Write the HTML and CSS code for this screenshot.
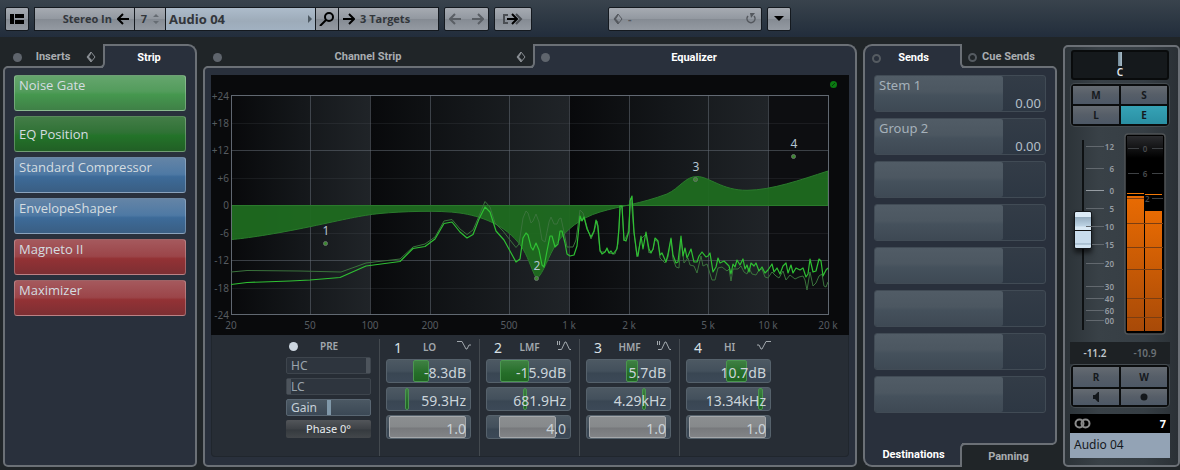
FILE: index.html
```html
<!DOCTYPE html>
<html lang="en">
<head>
    <meta charset="UTF-8">
    <meta name="viewport" content="width=device-width, initial-scale=1.0">
    <title>Channel Settings - Audio 04</title>
    <link rel="stylesheet" href="styles.css">
</head>
<body>
    <svg class="defs" width="0" height="0" aria-hidden="true">
        <symbol id="diamond" viewBox="0 0 10 12">
            <path d="M5 1 9 6 5 11 1 6Z" fill="none" stroke="currentColor"/>
            <path d="M5 1 1 6 5 11 6 9 3 6 5 3Z" fill="currentColor"/>
        </symbol>
        <symbol id="arrow-left" viewBox="0 0 12 12">
            <path d="M12 6H2M6 1 1 6l5 5" fill="none" stroke="currentColor" stroke-width="2"/>
        </symbol>
        <symbol id="arrow-right" viewBox="0 0 12 12">
            <path d="M0 6h10M6 1l5 5-5 5" fill="none" stroke="currentColor" stroke-width="2"/>
        </symbol>
        <symbol id="peak" viewBox="0 0 14 9">
            <path d="M.5 0v4M2.500 0v4M1 8.500h3.500L8 1h1l3.500 7.500H14" fill="none" stroke="currentColor"/>
        </symbol>
    </svg>

    <header class="toolbar">
        <button class="tool layout" aria-label="Window layout">
            <svg width="14" height="10" viewBox="0 0 14 10"><path d="M0 0h4v10H0zM5 0h9v4H5zM5 6h9v4H5z"/></svg>
        </button>
        <div class="group">
            <button class="tool input-bus">Stereo In <svg width="12" height="12" class="black"><use href="#arrow-left"/></svg></button>
            <button class="tool number">7 <svg width="6" height="12" viewBox="0 0 6 12"><path d="M0 4 3 1l3 3zM0 8l3 3 3-3z" fill="#666c73"/></svg></button>
            <button class="tool channel">Audio 04 <svg width="4" height="8" viewBox="0 0 4 8"><path d="M0 0l4 4-4 4z" fill="#4d5963"/></svg></button>
            <button class="tool search" aria-label="Search">
                <svg width="16" height="14" viewBox="0 0 16 14" fill="none" stroke="#000" stroke-width="2"><circle cx="10" cy="5" r="4"/><path d="M7 8l-6 6"/></svg>
            </button>
            <button class="tool targets"><svg width="12" height="12" class="black"><use href="#arrow-right"/></svg> 3 Targets</button>
        </div>
        <button class="tool history" aria-label="Back and forward">
            <svg width="12" height="12"><use href="#arrow-left"/></svg>
            <svg width="12" height="12"><use href="#arrow-right"/></svg>
        </button>
        <button class="tool export" aria-label="Route output">
            <svg width="20" height="12" viewBox="0 0 20 12" fill="none" stroke-width="2"><path d="M5 2H1v8h4M13 1l5 5-5 5" stroke="#4a4e53"/><path d="M4 6h10M9 1l5 5-5 5" stroke="#000"/></svg>
        </button>
        <button class="tool preset">
            <svg width="10" height="12"><use href="#diamond"/></svg> -
            <svg class="reload" width="12" height="12" viewBox="0 0 12 12"><path d="M3 3a4 4 0 1 0 6 0" fill="none" stroke="currentColor" stroke-width="1.500"/><path d="M5 0h5L6 5z" fill="currentColor"/></svg>
        </button>
        <button class="tool menu" aria-label="Functions menu">
            <svg width="10" height="5" viewBox="0 0 10 5"><path d="M0 0h10L5 5z"/></svg>
        </button>
    </header>

    <main class="panels">
        <section class="panel">
            <div class="tabs">
                <button class="tab inactive"><span class="dot"></span>Inserts<svg width="10" height="12"><use href="#diamond"/></svg></button>
                <button class="tab active">Strip</button>
            </div>
            <div class="panel-body">
                <ul class="modules">
                    <li><button class="module gate">Noise Gate</button></li>
                    <li><button class="module position">EQ Position</button></li>
                    <li><button class="module comp">Standard Compressor</button></li>
                    <li><button class="module comp">EnvelopeShaper</button></li>
                    <li><button class="module sat">Magneto II</button></li>
                    <li><button class="module sat">Maximizer</button></li>
                </ul>
            </div>
        </section>

        <section class="panel">
            <div class="tabs">
                <button class="tab inactive"><span class="dot"></span>Channel Strip<svg width="10" height="12"><use href="#diamond"/></svg></button>
                <button class="tab active"><span class="dot"></span>Equalizer</button>
            </div>
            <div class="panel-body">
                <svg class="graph" viewBox="211 75 638 260">
                    <defs>
                        <linearGradient id="decade">
                            <stop offset="0" stop-color="#08090b"/>
                            <stop offset="0.500" stop-color="#14171a"/>
                            <stop offset="1" stop-color="#202428"/>
                        </linearGradient>
                    </defs>
                    <rect x="211" y="75" width="638" height="260" fill="#090a0c"/>
                    <rect x="231" y="95" width="139" height="220" fill="url(#decade)"/>
                    <rect x="370" y="95" width="199" height="220" fill="url(#decade)"/>
                    <rect x="569" y="95" width="199" height="220" fill="url(#decade)"/>
                    <rect x="768" y="95" width="60" height="220" fill="#0d0e11"/>
                    <path class="grid-minor" d="M231 123.500h597M231 178.500h597M231 233.500h597M231 288.500h597"/>
                    <path class="grid-major" d="M231 150.500h597M231 260.500h597M310.500 95v220M430.500 95v220M509.500 95v220M629.500 95v220M708.500 95v220M370.500 95v220M569.500 95v220M768.500 95v220"/>
                    <path class="curve" d="M231.5 205.5V239.500C245 238.500 275 234 310 226.700S360 215.500 380 213.500 440 210 460 213 505 224 521 246C528 256 530 266 536.500 279 544 273 548 256 557 243S580 218 600 212 640 204 667 194C680 188 685 176.500 697 176.500S722 190.500 747 190.300 800 180 828 171V205.500Z"/>
                    <rect class="frame" x="231.500" y="95.500" width="597" height="219"/>
                    <polyline class="spectrum dim" points="231,272 247,270.500 300,271 341,272 366,263 400,259 413,247 425,244 435,237 444,221 452,219.500 460,229 467,234.500 473,230 479,216 485,201.500 490,207 495,223 503,231 510,240 516,247.500 519,244 523,218 526,211 528,213 531,223 533,221 536,214 539,222 542,240 545,242 549,222 551,217 554,224 557,224 559,219 561,218 564,232 567,247 573,247 576,240 580,210 583,213 587,227 591,239 594,232 597,221 600,252 605,252 607,249 609,253 615,254 618,244 620,210 622,206 624,241 628,233 631,198 634,233 637,257 641,239 646,234 649,253 653,250 655,240 658,242 660,258 665,263 668,257 671,239 673,259 676,267 679,268 681,239 684,263 688,258 690,265 694,266 697,273 701,256 703,266 707,264 712,280 715,280 718,268 722,267 727,271 729,269 731,281 733,269 738,269 741,266 744,272 747,274 749,268 752,274 756,275 759,270 762,269 765,277 768,278 772,272 776,276 779,278 783,271 786,280 790,275 795,279 799,277 803,276 805,280 807,290 810,272 813,286 816,283 819,276 822,274 824,286 826,287 828,282"/>
                    <polyline class="spectrum bright" points="231,284.500 247,282.500 262,282 290,281 310,280 340,277.500 366,266 400,261.500 413,248.500 425,246.500 435,239 444,223.500 452,222 460,232 467,238 473,234.500 479,219 485,207 490,212 496,231 504,240 510,251 516,262 520,259 523,238 526,233 528,235 531,247 533,250 536,243 539,250 542,265 544,267 547,251 550,236 552,236 555,247 558,244 560,231 562,231 565,243 567,254 570,256 574,255 577,246 580,216 582,221 584,217 587,229 591,237 594,231 596,220 598,226 600,250 602,254 605,252 607,248 609,253 611,251 613,254 617,249 619,228 620,206 622,206 624,240 626,241 629,231 630,201 632,196 634,232 637,255 638,256 641,236 643,249 646,232 649,249 651,253 653,249 655,238 658,241 660,255 662,253 666,262 668,254 671,238 673,255 676,263 678,262 681,236 683,256 685,248 687,258 691,249 694,262 697,262 699,256 702,252 706,257 708,256 710,253 713,272 716,267 718,258 720,263 724,261 729,266 731,274 733,264 735,267 737,260 740,265 743,259 745,269 747,265 749,272 751,263 754,266 756,263 759,271 762,267 765,273 768,270 772,264 774,272 777,268 780,274 783,266 786,263 788,273 791,265 793,273 796,268 800,270 803,268 806,277 808,274 810,259 813,272 816,271 819,259 821,261 823,276 826,270 828,268"/>
                    <g class="db-axis">
                        <text x="229" y="100">+24</text>
                        <text x="229" y="127">+18</text>
                        <text x="229" y="154">+12</text>
                        <text x="229" y="182">+6</text>
                        <text x="229" y="209">0</text>
                        <text x="229" y="237">-6</text>
                        <text x="229" y="264">-12</text>
                        <text x="229" y="292">-18</text>
                        <text x="229" y="319">-24</text>
                    </g>
                    <g class="freq-axis">
                        <text x="231" y="329">20</text>
                        <text x="310" y="329">50</text>
                        <text x="370" y="329">100</text>
                        <text x="430" y="329">200</text>
                        <text x="509" y="329">500</text>
                        <text x="569" y="329">1 k</text>
                        <text x="629" y="329">2 k</text>
                        <text x="708" y="329">5 k</text>
                        <text x="768" y="329">10 k</text>
                        <text x="828" y="329">20 k</text>
                    </g>
                    <g class="handles">
                        <circle cx="325.500" cy="243.500" r="2"/>
                        <circle cx="536.500" cy="278.500" r="2"/>
                        <circle cx="695.500" cy="179.500" r="2"/>
                        <circle cx="793.500" cy="156.500" r="2"/>
                        <text x="326" y="235">1</text>
                        <text x="537" y="270">2</text>
                        <text x="696" y="171">3</text>
                        <text x="794" y="148">4</text>
                    </g>
                    <circle cx="833.500" cy="84.500" r="3.500" fill="#0b7a12"/>
                    <path d="M832 86l3-3" stroke="#053d08"/>
                </svg>

                <div class="bands">
                    <div class="pre">
                        <div class="pre-head"><span class="dot lit"></span>PRE</div>
                        <div class="slider off"><label for="hc">HC</label><input type="range" id="hc" value="100"></div>
                        <div class="slider off"><label for="lc">LC</label><input type="range" id="lc" value="0"></div>
                        <div class="slider"><label for="gain">Gain</label><input type="range" id="gain" value="50"></div>
                        <button class="phase">Phase 0°</button>
                    </div>
                    <div class="band">
                        <div class="band-head">
                            <b>1</b><span>LO</span>
                            <svg width="14" height="9" viewBox="0 0 14 9"><path d="M0 .5h5l4 7.500h1l2-4h2" fill="none" stroke="currentColor"/></svg>
                        </div>
                        <div class="value"><i class="fill" style="left: 31%; width: 20%"></i><input type="text" value="-8.3dB" aria-label="Band 1 gain"></div>
                        <div class="value"><i class="fill" style="left: 22%; width: 5%"></i><input type="text" value="59.3Hz" aria-label="Band 1 frequency"></div>
                        <div class="value q"><i class="fill" style="left: 3%; width: 92%"></i><input type="text" value="1.0" aria-label="Band 1 Q"></div>
                    </div>
                    <div class="band">
                        <div class="band-head">
                            <b>2</b><span>LMF</span>
                            <svg width="14" height="9"><use href="#peak"/></svg>
                        </div>
                        <div class="value"><i class="fill" style="left: 16%; width: 35%"></i><input type="text" value="-15.9dB" aria-label="Band 2 gain"></div>
                        <div class="value"><i class="fill" style="left: 43%; width: 5%"></i><input type="text" value="681.9Hz" aria-label="Band 2 frequency"></div>
                        <div class="value q"><i class="fill" style="left: 15%; width: 68%"></i><input type="text" value="4.0" aria-label="Band 2 Q"></div>
                    </div>
                    <div class="band">
                        <div class="band-head">
                            <b>3</b><span>HMF</span>
                            <svg width="14" height="9"><use href="#peak"/></svg>
                        </div>
                        <div class="value"><i class="fill" style="left: 47%; width: 14%"></i><input type="text" value="5.7dB" aria-label="Band 3 gain"></div>
                        <div class="value"><i class="fill" style="left: 66%; width: 5%"></i><input type="text" value="4.29kHz" aria-label="Band 3 frequency"></div>
                        <div class="value q"><i class="fill" style="left: 3%; width: 92%"></i><input type="text" value="1.0" aria-label="Band 3 Q"></div>
                    </div>
                    <div class="band">
                        <div class="band-head">
                            <b>4</b><span>HI</span>
                            <svg width="14" height="9" viewBox="0 0 14 9"><path d="M0 4h2l2 4h1L9 .5h5" fill="none" stroke="currentColor"/></svg>
                        </div>
                        <div class="value"><i class="fill" style="left: 47%; width: 25%"></i><input type="text" value="10.7dB" aria-label="Band 4 gain"></div>
                        <div class="value"><i class="fill" style="left: 86%; width: 5%"></i><input type="text" value="13.34kHz" aria-label="Band 4 frequency"></div>
                        <div class="value q"><i class="fill" style="left: 3%; width: 92%"></i><input type="text" value="1.0" aria-label="Band 4 Q"></div>
                    </div>
                </div>
            </div>
        </section>

        <section class="panel sends">
            <div class="tabs">
                <button class="tab active"><span class="ring"></span>Sends</button>
                <button class="tab inactive"><span class="ring"></span>Cue Sends</button>
            </div>
            <div class="panel-body">
                <ul class="slots">
                    <li class="slot"><span class="slot-name">Stem 1</span><span class="slot-level">0.00</span></li>
                    <li class="slot"><span class="slot-name">Group 2</span><span class="slot-level">0.00</span></li>
                    <li class="slot"><span class="slot-name"></span></li>
                    <li class="slot"><span class="slot-name"></span></li>
                    <li class="slot"><span class="slot-name"></span></li>
                    <li class="slot"><span class="slot-name"></span></li>
                    <li class="slot"><span class="slot-name"></span></li>
                    <li class="slot"><span class="slot-name"></span></li>
                </ul>
            </div>
            <div class="tabs bottom">
                <button class="tab active">Destinations</button>
                <button class="tab inactive">Panning</button>
            </div>
        </section>

        <section class="channel-strip">
            <div class="pan"><i></i>C</div>
            <div class="buttons">
                <button>M</button>
                <button>S</button>
                <button>L</button>
                <button class="on">E</button>
            </div>
            <div class="level">
                <input type="range" class="fader" aria-label="Volume" value="53">
                <svg class="scale" width="30" height="190" viewBox="0 0 30 190">
                    <path d="M0 6.500h18M0 28.500h18M0 68.500h18M0 86.500h18M6 104.500h12M0 123.500h18M0 146.500h18M0 158.500h18M0 170.500h18M0 180.500h18" stroke="#62686e"/>
                    <path d="M0 50.500h18" stroke="#969ca2"/>
                    <g>
                        <text x="28" y="10">12</text>
                        <text x="28" y="32">6</text>
                        <text x="28" y="54">0</text>
                        <text x="28" y="72">5</text>
                        <text x="28" y="90">10</text>
                        <text x="28" y="108">15</text>
                        <text x="28" y="127">20</text>
                        <text x="28" y="150">30</text>
                        <text x="28" y="162">40</text>
                        <text x="28" y="174">60</text>
                        <text x="28" y="184">00</text>
                    </g>
                </svg>
                <svg class="meter" width="42" height="202" viewBox="0 0 42 202">
                    <defs>
                        <linearGradient id="bar" x2="0" y2="1">
                            <stop offset="0" stop-color="#e96b02"/>
                            <stop offset="1" stop-color="#a84a08"/>
                        </linearGradient>
                        <linearGradient id="glass" x2="0" y2="1">
                            <stop offset="0" stop-color="#2a2b2e"/>
                            <stop offset="1" stop-color="#000"/>
                        </linearGradient>
                    </defs>
                    <rect x="1" y="1" width="40" height="200" rx="3" fill="#000" stroke="#4f5356" stroke-width="1.500"/>
                    <rect x="3" y="3" width="36" height="22" fill="url(#glass)"/>
                    <g class="meter-text">
                        <text x="21" y="19">0</text>
                        <text x="21" y="44">6</text>
                        <text x="21" y="69">12</text>
                    </g>
                    <path d="M4 15.500h11M28 15.500h11M4 40.500h11M28 40.500h11M28 65.500h11" stroke="#3e4144"/>
                    <rect x="3" y="63" width="17" height="135" fill="url(#bar)"/>
                    <rect x="21" y="78" width="17" height="120" fill="url(#bar)"/>
                    <path d="M3 60.500h17M21 61.500h17" stroke="#f07808"/>
                    <path d="M3 65.500h17M3 90.500h36M3 114.500h36M3 136.500h36M3 165.500h36M3 184.500h36" stroke="#7b3e12"/>
                </svg>
            </div>
            <div class="readout"><span>-11.2</span><span class="peak">-10.9</span></div>
            <div class="buttons">
                <button>R</button>
                <button>W</button>
                <button aria-label="Monitor"><svg width="6" height="10" viewBox="0 0 6 10"><path d="M0 3h2l3-3h1v10H5L2 7H0z" fill="#14181c"/></svg></button>
                <button aria-label="Record enable"><svg width="8" height="8" viewBox="0 0 8 8"><circle cx="4" cy="4" r="3.500" fill="#14181c"/></svg></button>
            </div>
            <div class="strip-number">
                <svg width="17" height="11" viewBox="0 0 17 11" fill="none" stroke="#8b8b8b" stroke-width="2"><circle cx="5.500" cy="5.500" r="4"/><circle cx="11.500" cy="5.500" r="4"/></svg>
                <span>7</span>
            </div>
            <div class="strip-name">Audio 04</div>
        </section>
    </main>
</body>
</html>
```
FILE: styles.css
```css
* {
    margin: 0;
    padding: 0;
    box-sizing: border-box;
}

body {
    display: flex;
    flex-direction: column;
    min-height: 100vh;
    font-family: "Noto Sans", "Open Sans", sans-serif;
    font-size: 13px;
    background-color: #202528;
    color: #c8cdd2;
}

button, input {
    font: inherit;
    color: inherit;
    border: none;
    background: none;
}

ul {
    list-style: none;
}

svg {
    display: block;
    flex: none;
}

.defs {
    position: absolute;
}

/* toolbar */
.toolbar {
    display: flex;
    align-items: center;
    gap: 5px;
    height: 37px;
    padding: 0 5px;
    background: linear-gradient(#39434d, #2b3642 60%, #222d3c);
}

.tool {
    display: flex;
    align-items: center;
    justify-content: center;
    height: 24px;
    gap: 5px;
    border: 1px solid #14191f;
    border-radius: 2px;
    background: linear-gradient(#a6abb2, #9298a0 50%, #858b93 52%, #949aa2);
    color: #32363b;
    font-family: "Open Sans", sans-serif;
    font-size: 11px;
    font-weight: 700;
    white-space: nowrap;
}

.black {
    color: #000;
}

.layout, .menu {
    width: 24px;
}

.group {
    display: flex;
    width: 405px;
}

.group .tool {
    border-radius: 0;
    border-right-width: 0;
}

.group .tool:last-child {
    border-right-width: 1px;
}

.group .input-bus {
    width: 100px;
    justify-content: flex-end;
    padding-right: 5px;
}

.group .number {
    width: 31px;
    gap: 6px;
}

.group .channel {
    width: 150px;
    justify-content: space-between;
    padding: 0 3px;
    background: linear-gradient(#adbccb, #9dabb9 60%, #a1b1c1);
    font-size: 13px;
}

.group .search {
    width: 23px;
}

.group .targets {
    flex: 1;
    justify-content: flex-start;
    padding-left: 4px;
}

.history {
    width: 45px;
    gap: 11px;
    color: #5a5f65;
}

.export {
    width: 38px;
}

.preset {
    width: 154px;
    margin-left: 71px;
    padding: 0 4px;
    justify-content: flex-start;
    color: #54585e;
}

.preset .reload {
    margin-left: auto;
}

/* panels */
.panels {
    flex: 1;
    display: grid;
    grid-template-columns: 194px minmax(654px, 1fr) 194px 117px;
    gap: 6px;
    padding: 7px 0 3px 3px;
}

.panel {
    display: flex;
    flex-direction: column;
}

.panel-body {
    flex: 1;
    padding: 7px 6px 8px;
    border: 2px solid #6b7076;
    border-radius: 5px 0 5px 5px;
    background-color: #29303c;
}

.tabs {
    display: flex;
    height: 24px;
    margin-bottom: -2px;
    padding-left: 4px;
}

.tab {
    position: relative;
    flex: 1;
    display: flex;
    align-items: center;
    justify-content: center;
    font-family: Roboto, "Open Sans", sans-serif;
    font-size: 11px;
    font-weight: 700;
    color: #a9adb1;
    background-color: #202528;
}

.tab.inactive {
    z-index: 1;
    border: 0 solid #6b7076;
    border-width: 0 2px 2px 0;
    border-bottom-right-radius: 5px;
    padding: 2px 4px 0 0;
}

.tab.active {
    margin-left: -2px;
    border: 0 solid #6b7076;
    border-width: 2px 2px 0 0;
    border-top-right-radius: 9px;
    background-color: #29303c;
    color: #fff;
}

.tab .dot, .tab .ring {
    position: absolute;
    left: 6px;
    top: 9px;
}

.tab.active .dot {
    left: 8px;
    top: 7px;
}

.tab svg {
    position: absolute;
    right: 7px;
    top: 7px;
    color: #8a8f94;
}

.dot {
    width: 9px;
    height: 9px;
    border-radius: 50%;
    background-color: #5f656d;
}

.dot.lit {
    background-color: #ccd5df;
}

.ring {
    width: 9px;
    height: 9px;
    border: 2px solid #555b61;
    border-radius: 50%;
}

/* strip modules */
.modules {
    display: grid;
    gap: 5px;
    margin: 0 3px;
}

.module {
    display: block;
    width: 100%;
    height: 36px;
    padding: 0 4px 16px;
    border: 1px solid rgba(255, 255, 255, 0.250);
    border-radius: 3px;
    text-align: left;
    font-family: "Open Sans", sans-serif;
    line-height: 18px;
    color: #d5dde0;
}

.gate {
    background: linear-gradient(#65a56d, #539c5c 45%, #45974e 55%, #3f8047);
}

.position {
    padding: 0 4px;
    background: linear-gradient(#437d47, #307236 45%, #237329 55%, #215f25);
}

.comp {
    background: linear-gradient(#6484a6, #4e79a4 48%, #3d6b99 55%, #3a5e83);
}

.sat {
    background: linear-gradient(#a5595d, #9b4549 48%, #933235 55%, #7d2f33);
}

/* equalizer graph */
.graph {
    width: 100%;
    height: auto;
}

.curve {
    fill: #1f6b20;
    fill-opacity: 0.950;
    stroke: #2a7a2c;
}

.grid-minor, .grid-major, .frame {
    fill: none;
    stroke: #6a727c;
    stroke-opacity: 0.150;
}

.grid-major {
    stroke-opacity: 0.500;
}

.frame {
    stroke-opacity: 0.900;
}

.spectrum {
    fill: none;
    stroke-linejoin: round;
}

.dim {
    stroke: #3a733c;
}

.bright {
    stroke: #2fc033;
    stroke-width: 1.200;
}

.db-axis, .freq-axis {
    font-size: 10px;
    fill: #565b60;
    text-anchor: end;
}

.freq-axis {
    text-anchor: middle;
}

.handles {
    font-size: 12px;
    text-anchor: middle;
    fill: #b4c4d1;
}

.handles circle {
    fill: #3a8a2c;
    stroke: #66736a;
}

/* equalizer bands */
.bands {
    display: grid;
    grid-template-columns: 167px repeat(4, 100px);
    height: 122px;
    padding-top: 4px;
    border: 1px solid #20262d;
    border-top: 0;
    border-radius: 0 0 4px 4px;
    background-color: #272d35;
}

.pre {
    display: flex;
    flex-direction: column;
    gap: 4px;
    padding: 0 8px 0 74px;
}

.pre-head {
    display: flex;
    align-items: center;
    gap: 22px;
    height: 14px;
    padding-left: 3px;
    font-size: 10px;
    font-weight: 600;
    color: #a2a8ad;
}

.slider {
    display: grid;
    height: 17px;
    color: #c6d0d8;
    font-size: 12px;
}

.slider label, .slider input {
    grid-area: 1 / 1;
}

.slider label {
    z-index: 1;
    padding-left: 5px;
    line-height: 17px;
    pointer-events: none;
}

.slider input {
    appearance: none;
    width: 85px;
    height: 17px;
    border: 1px solid #596672;
    border-radius: 2px;
    background: linear-gradient(#4b5863, #3b4855);
}

.slider input::-webkit-slider-thumb {
    appearance: none;
    width: 4px;
    height: 15px;
    background-color: #8098a9;
}

.slider.off {
    color: #9aa4ad;
}

.slider.off input {
    border-color: #3e454d;
    background: #2e353e;
}

.slider.off input::-webkit-slider-thumb {
    background-color: #4d545c;
}

.phase {
    width: 85px;
    height: 18px;
    border-radius: 2px;
    background: linear-gradient(#53565a, #3d4146 50%, #353a3f 55%, #43474b);
    color: #e8ecef;
    font-size: 11px;
    line-height: 16px;
}

.band {
    display: flex;
    flex-direction: column;
    gap: 4px;
    padding: 0 8px 0 6px;
    border-left: 1px solid #43494f;
}

.band-head {
    display: flex;
    justify-content: space-between;
    align-items: center;
    height: 16px;
    padding-left: 8px;
    font-size: 10px;
    font-weight: 600;
    color: #a2a8ad;
}

.band-head b {
    font-size: 14px;
    font-weight: 400;
    color: #d8e0e6;
}

.band-head svg {
    margin-bottom: 4px;
}

.value {
    position: relative;
    height: 24px;
    border: 1px solid #56626c;
    border-radius: 3px;
    background: linear-gradient(#4d5963, #43505c 50%, #394653 60%, #3c4957);
}

.value input {
    position: relative;
    width: 100%;
    height: 22px;
    padding: 2px 4px 0 0;
    text-align: right;
    font-size: 14px;
    color: #cbd4da;
}

.fill {
    position: absolute;
    top: 0;
    bottom: 0;
    border: 1px solid #4a9650;
    border-radius: 2px;
    background: linear-gradient(#3f8043, #256e29 60%, #206523);
}

.q .fill {
    border-color: #a4a7aa;
    background: linear-gradient(#8b8e90, #86898b 50%, #77797c 55%, #828487);
}

/* sends */
.sends .tabs {
    padding: 0 4px 0 0;
}

.sends .tab {
    flex: none;
}

.sends .tab.active {
    width: 99px;
    margin: 0 -2px 0 0;
    border-width: 2px 0 0 2px;
    border-radius: 9px 0 0 0;
}

.sends .tab.inactive {
    flex: 1;
    padding: 2px 0 0 2px;
    border-width: 0 0 2px 2px;
    border-radius: 0 0 0 5px;
}

.sends .active .ring {
    left: 7px;
    top: 8px;
}

.sends .panel-body {
    padding-bottom: 0;
    border-radius: 0 5px 5px 0;
}

.sends .tabs.bottom {
    position: relative;
    height: 24px;
    margin: -2px 0 0;
}

.sends .bottom .tab.active {
    border-width: 0 0 2px 2px;
    border-radius: 0 0 0 9px;
}

.sends .bottom .tab.inactive {
    padding-top: 0;
    border-width: 2px 0 0 2px;
    border-radius: 5px 0 0 0;
}

.slots {
    display: grid;
    gap: 6px;
    margin: 0 3px;
}

.slot {
    display: grid;
    grid-template-columns: 3fr 1fr;
    height: 37px;
    border: 1px solid #414b55;
    border-radius: 3px;
    background: linear-gradient(#333c47, #2d3743);
    color: #a5b1ba;
}

.slot-name {
    padding-left: 4px;
    line-height: 19px;
    border-radius: 2px;
    background: linear-gradient(#515c66, #4c5761 45%, #45515c 55%, #3e4954);
}

.slot-level {
    align-self: end;
    padding-right: 4px;
    text-align: right;
    line-height: 16px;
    color: #b4bfc8;
}

/* mixer channel */
.channel-strip {
    display: flex;
    flex-direction: column;
    margin-top: 1px;
    padding: 3px 8px 7px 5px;
    border: 2px solid #6b7076;
    border-radius: 5px;
    background: linear-gradient(90deg, #2c3338, #394147 30%, #363e44 70%, #2a3035);
}

.pan {
    display: flex;
    flex-direction: column;
    align-items: center;
    height: 30px;
    margin: 0 1px 4px;
    border: 2px solid #090b0c;
    border-radius: 3px;
    background-color: #15191c;
    color: #e4e8eb;
    font-size: 10px;
    font-weight: 600;
    line-height: 12px;
}

.pan i {
    width: 4px;
    height: 14px;
    background: linear-gradient(90deg, #6f8796, #a8bcc8);
}

.buttons {
    display: grid;
    grid-template-columns: 1fr 1fr;
    gap: 2px;
    height: 42px;
    margin: 0 1px;
    padding: 2px;
    border-radius: 4px;
    background-color: #0b0d0e;
    box-shadow: 0 0 0 1px #454c51;
}

.buttons button {
    display: flex;
    align-items: center;
    justify-content: center;
    background: linear-gradient(#656b72, #565e68 50%, #4d5866);
    color: #161a1e;
    font-size: 10px;
    font-weight: 700;
}

.buttons .on {
    background: linear-gradient(#36a3b6, #2a8fa3);
}

.level {
    flex: 1;
    display: flex;
    align-items: flex-start;
    padding-top: 7px;
    min-height: 213px;
}

.fader {
    appearance: none;
    writing-mode: vertical-lr;
    direction: rtl;
    flex: none;
    width: 18px;
    height: 190px;
    margin: 7px 0 0 4px;
    background: linear-gradient(#0e1113, #0e1113) center / 2px 100% no-repeat;
}

.fader::-webkit-slider-thumb {
    appearance: none;
    width: 18px;
    height: 38px;
    border: 1px solid #12161a;
    border-radius: 2px;
    background: linear-gradient(#dcebf7 0 5px, #93abbe 5px, #bdd3e4 14px, #d9e9f5 15px 18px, #111 18px 19px, #c8dcec 19px 31px, #8ca5b9 32px, #d2e4f2 33px);
    box-shadow: 0 4px 5px rgba(0, 0, 0, 0.600);
}

.scale {
    margin: 7px 0 0 -6px;
    font-size: 8px;
    font-weight: 600;
    fill: #969ca2;
    text-anchor: end;
}

.meter {
    margin-left: 8px;
}

.meter-text {
    fill: #494c4f;
    font-size: 8px;
    font-weight: 600;
    text-anchor: middle;
}

.readout {
    display: flex;
    justify-content: space-around;
    align-items: center;
    height: 22px;
    margin-bottom: 1px;
    background-color: #1d2124;
    font-size: 10px;
    font-weight: 600;
    color: #c0c6cb;
}

.readout .peak {
    color: #6b7176;
}

.strip-number {
    display: flex;
    align-items: center;
    justify-content: space-between;
    height: 19px;
    margin-top: 7px;
    padding: 0 4px;
    background-color: #000;
    color: #fff;
    font-size: 11px;
    font-weight: 700;
}

.strip-name {
    height: 25px;
    padding-left: 4px;
    background-color: #93a3b5;
    color: #15191d;
    font-size: 12px;
    line-height: 24px;
}
```
